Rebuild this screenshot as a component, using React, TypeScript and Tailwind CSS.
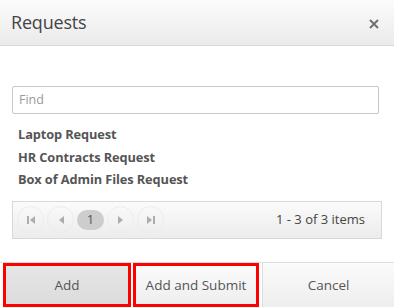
const items = ["Laptop Request", "HR Contracts Request", "Box of Admin Files Request"];

function PagerBtn({ children }: { children: React.ReactNode }) {
  return (
    <span className="flex h-[27px] w-[27px] items-center justify-center rounded-full border border-[#ececec] text-[#a8a8a8]">
      {children}
    </span>
  );
}

export default function App() {
  return (
    <div className="flex h-[307px] w-[394px] flex-col overflow-hidden bg-white font-['Open_Sans',sans-serif] text-[#555]">
      <div className="flex h-[46px] shrink-0 items-center justify-between border-b border-[#d8d8d8] bg-gradient-to-b from-[#fcfcfc] to-[#eaeaea] pl-[11px] pr-[15px]">
        <h2 className="text-[18px] tracking-[-0.2px] text-[#444]">Requests</h2>
        <svg width="10" height="10" viewBox="0 0 10 10" className="mt-[2px]">
          <path d="M1 1L9 9M9 1L1 9" stroke="#707070" strokeWidth="2" />
        </svg>
      </div>

      <div className="px-3 pt-[40px]">
        <div className="mr-[3px] flex h-[28px] items-center rounded-[2px] border border-[#c8c8c8] px-[6px] text-[12.5px] text-[#9a9a9a]">
          Find
        </div>
        <ul className="mt-[9px] pl-[6px] text-[12.8px] font-bold leading-[22.5px] tracking-[-0.1px] text-[#555]">
          {items.map((t) => (
            <li key={t}>{t}</li>
          ))}
        </ul>
        <div className="mt-[10px] flex h-[38px] items-center justify-between border border-[#d8d8d8] bg-gradient-to-b from-[#fbfbfb] to-[#ececec] pl-[4px] pr-[16px]">
          <div className="flex items-center gap-[3px]">
            <PagerBtn>
              <svg width="8" height="8" viewBox="0 0 8 8"><path d="M0 0h2v8H0zM8 0v8L3 4z" fill="#adadad" /></svg>
            </PagerBtn>
            <PagerBtn>
              <svg width="6" height="8" viewBox="0 0 6 8"><path d="M6 0v8L1 4z" fill="#adadad" /></svg>
            </PagerBtn>
            <span className="flex h-[20px] w-[27px] items-center justify-center rounded-full bg-[#cdcdcd] text-[13px] text-[#555]">1</span>
            <PagerBtn>
              <svg width="6" height="8" viewBox="0 0 6 8"><path d="M0 0v8l5-4z" fill="#adadad" /></svg>
            </PagerBtn>
            <PagerBtn>
              <svg width="8" height="8" viewBox="0 0 8 8"><path d="M0 0v8l5-4zM6 0h2v8H6z" fill="#adadad" /></svg>
            </PagerBtn>
          </div>
          <span className="text-[13px] text-[#444]">1 - 3 of 3 items</span>
        </div>
      </div>

      <div className="mt-auto flex h-[45px] border-t border-[#dedede] text-[13.5px] text-[#555]">
        <button className="ml-[3px] flex w-[128px] items-center justify-center border-[3px] border-[#ff0000] bg-gradient-to-b from-[#e6e6e6] to-[#dcdcdc]">
          Add
        </button>
        <button className="ml-[2px] flex w-[126px] items-center justify-center border-[3px] border-[#ff0000] bg-gradient-to-b from-[#fbfbfb] to-[#eeeeee]">
          Add and Submit
        </button>
        <button className="ml-[3px] flex flex-1 items-center justify-center border-l border-[#dcdcdc] bg-gradient-to-b from-[#fbfbfb] to-[#eeeeee]">
          Cancel
        </button>
      </div>
    </div>
  );
}
